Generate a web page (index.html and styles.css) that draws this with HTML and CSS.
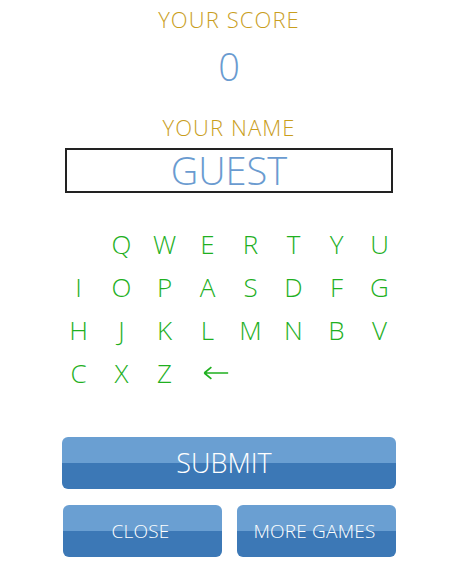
FILE: index.html
```html
<!DOCTYPE html>
<html lang="en">
<head>
<meta charset="UTF-8">
<meta name="viewport" content="width=device-width, initial-scale=1.0">
<title>Submit Score</title>
<link rel="stylesheet" href="styles.css">
</head>
<body>

<div class="label score-label">YOUR SCORE</div>
<div class="score-value">0</div>

<div class="label name-label">YOUR NAME</div>
<div class="name-box">GUEST</div>

<div class="keyboard">
  <span class="key"></span>
  <span class="key">Q</span>
  <span class="key">W</span>
  <span class="key">E</span>
  <span class="key">R</span>
  <span class="key">T</span>
  <span class="key">Y</span>
  <span class="key">U</span>
  <span class="key">I</span>
  <span class="key">O</span>
  <span class="key">P</span>
  <span class="key">A</span>
  <span class="key">S</span>
  <span class="key">D</span>
  <span class="key">F</span>
  <span class="key">G</span>
  <span class="key">H</span>
  <span class="key">J</span>
  <span class="key">K</span>
  <span class="key">L</span>
  <span class="key">M</span>
  <span class="key">N</span>
  <span class="key">B</span>
  <span class="key">V</span>
  <span class="key">C</span>
  <span class="key">X</span>
  <span class="key">Z</span>
  <span class="key back">
    <svg width="31" height="16" viewBox="0 0 31 16"><path d="M1.5 8 H30 M1.5 8 L10 1 M1.5 8 L10 15" fill="none" stroke="#1fb01f" stroke-width="2"/></svg>
  </span>
</div>

<div class="btn submit">SUBMIT</div>

<div class="btn-row">
  <div class="btn small">CLOSE</div>
  <div class="btn small">MORE GAMES</div>
</div>

</body>
</html>
```

FILE: styles.css
```css
body {
  margin: 0;
  padding: 0 0 0 3px;
  background-color: #fff;
  font-family: "Open Sans", sans-serif;
  font-weight: 300;
  text-align: center;
}

.label {
  font-size: 22px;
  line-height: 26px;
  letter-spacing: 1.1px;
  color: #c99e1d;
}

.score-label {
  margin-top: 6px;
}

.score-value {
  margin-top: 12px;
  font-size: 38px;
  line-height: 44px;
  color: #6a9bd0;
}

.name-label {
  margin-top: 26px;
}

.name-box {
  width: 324px;
  height: 41px;
  margin: 8px auto 0;
  border: 2px solid #222;
  font-size: 38px;
  line-height: 41px;
  color: #6a9bd0;
}

.keyboard {
  display: grid;
  grid-template-columns: repeat(8, 43px);
  grid-auto-rows: 43px;
  width: 344px;
  margin: 29px auto 0;
}

.key {
  display: flex;
  justify-content: center;
  align-items: center;
  font-size: 26px;
  color: #1fb01f;
  cursor: pointer;
}

.key.back {
  justify-content: flex-start;
  padding-left: 17px;
}

.btn {
  color: #fff;
  border-radius: 6px;
  background: linear-gradient(#6a9fd2 50%, #3c78b6 50%);
  cursor: pointer;
}

.submit {
  width: 324px;
  height: 52px;
  margin: 43px auto 0;
  padding-right: 10px;
  font-size: 27px;
  line-height: 52px;
}

.btn-row {
  display: grid;
  grid-template-columns: 1fr 1fr;
  gap: 15px;
  width: 333px;
  margin: 16px auto 0;
}

.small {
  height: 52px;
  padding-right: 3px;
  font-size: 19px;
  line-height: 52px;
  letter-spacing: 0.2px;
}
```
